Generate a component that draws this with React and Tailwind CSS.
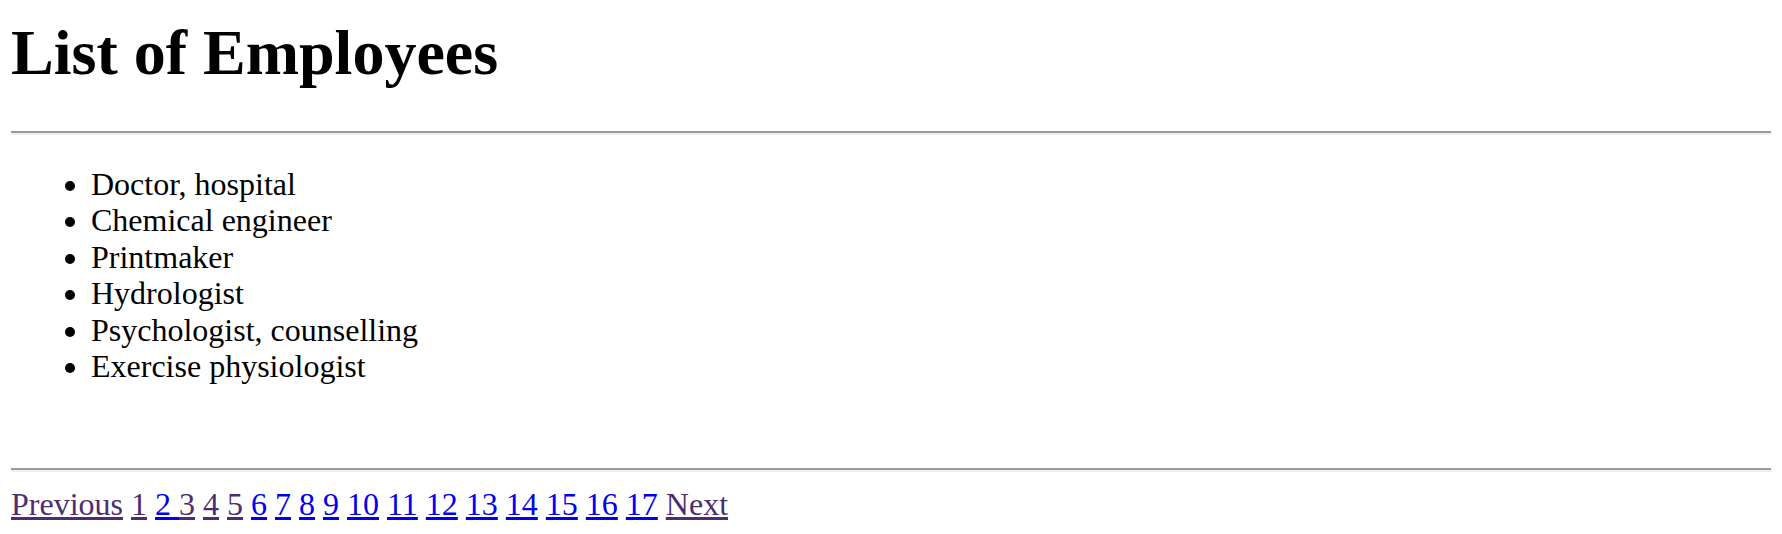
const jobs = [
  "Doctor, hospital",
  "Chemical engineer",
  "Printmaker",
  "Hydrologist",
  "Psychologist, counselling",
  "Exercise physiologist",
];

const visited = new Set([1, 3, 4, 5]);

function Rule({ className = "" }) {
  return (
    <div className={`border-t-2 border-b-2 border-t-[#9a9a9a] border-b-[#eeeeee] ${className}`} />
  );
}

function PageLink({ children, seen }) {
  return (
    <a
      href="#"
      className={`underline ${seen ? "text-[#4e2c72]" : "text-[#0000ee]"}`}
    >
      {children}
    </a>
  );
}

export default function App() {
  const pages = Array.from({ length: 17 }, (_, i) => i + 1);

  return (
    <div className="min-h-screen bg-white px-[11px] pt-[16px] font-['Liberation_Serif',serif] text-[32px] leading-[normal] text-black">
      <h1 className="mb-[41px] text-[64px] font-bold leading-[normal]">List of Employees</h1>

      <Rule />

      <ul className="mt-[31px] list-disc pl-[80px]">
        {jobs.map((job) => (
          <li key={job} className="leading-[36.4px]">{job}</li>
        ))}
      </ul>

      <Rule className="mt-[84px]" />

      {/* pagination */}
      <div className="mt-[14px] whitespace-pre">
        <PageLink seen>Previous</PageLink>{" "}
        {pages.map((p) =>
          p === 2 ? (
            <PageLink key={p}>{"2 "}</PageLink>
          ) : (
            <span key={p}>
              <PageLink seen={visited.has(p)}>{p}</PageLink>{" "}
            </span>
          )
        )}
        <PageLink seen>Next</PageLink>
      </div>
    </div>
  );
}
